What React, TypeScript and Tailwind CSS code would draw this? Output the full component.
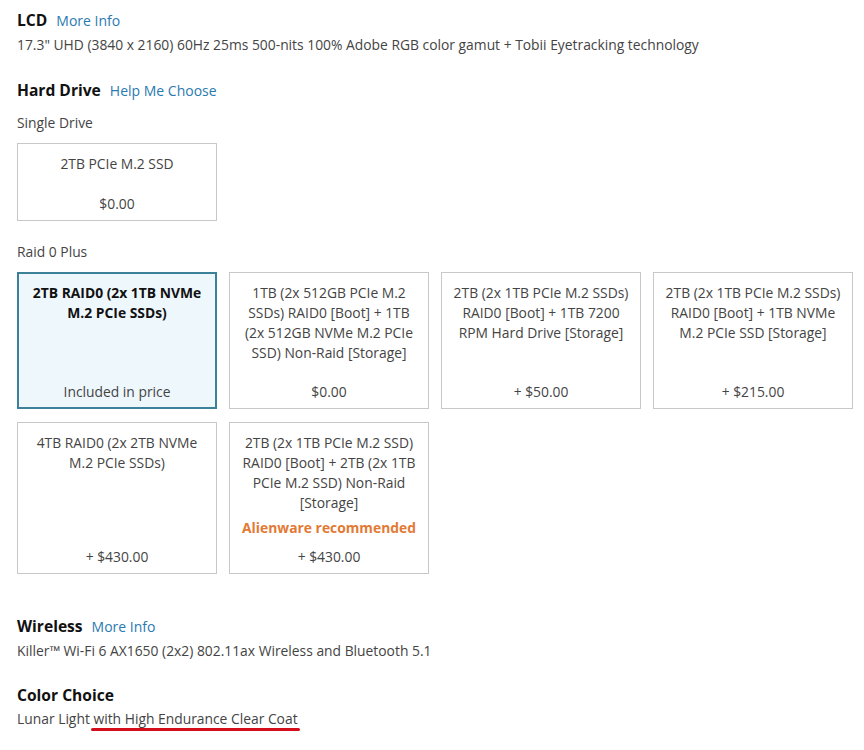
import React from "react";

type Card = { lines: string; price: string; selected?: boolean; rec?: boolean };

const raid: Card[] = [
  { lines: "2TB RAID0 (2x 1TB NVMe M.2 PCIe SSDs)", price: "Included in price", selected: true },
  { lines: "1TB (2x 512GB PCIe M.2 SSDs) RAID0 [Boot] + 1TB (2x 512GB NVMe M.2 PCIe SSD) Non-Raid [Storage]", price: "$0.00" },
  { lines: "2TB (2x 1TB PCIe M.2 SSDs) RAID0 [Boot] + 1TB 7200 RPM Hard Drive [Storage]", price: "+ $50.00" },
  { lines: "2TB (2x 1TB PCIe M.2 SSDs) RAID0 [Boot] + 1TB NVMe M.2 PCIe SSD [Storage]", price: "+ $215.00" },
  { lines: "4TB RAID0 (2x 2TB NVMe M.2 PCIe SSDs)", price: "+ $430.00" },
  { lines: "2TB (2x 1TB PCIe M.2 SSD) RAID0 [Boot] + 2TB (2x 1TB PCIe M.2 SSD) Non-Raid [Storage]", price: "+ $430.00", rec: true },
];

function OptionCard({ c }: { c: Card }) {
  return (
    <div
      className={
        c.selected
          ? "flex flex-col items-center text-center border-2 border-[#3a8199] bg-[#eef7fc] px-[10px] pt-[9px] pb-[5px]"
          : "flex flex-col items-center text-center border border-[#c8c8c8] bg-white px-[8px] pt-[10px] pb-[6px]"
      }
    >
      <div className={c.selected ? "font-bold text-[#111] leading-[20px]" : "leading-[20px]"}>{c.lines}</div>
      {c.rec && <div className="mt-[5px] font-bold text-[#e27a35] leading-[20px] whitespace-nowrap">Alienware recommended</div>}
      <div className="mt-auto leading-[20px]">{c.price}</div>
    </div>
  );
}

function Heading({ title, link }: { title: string; link?: string }) {
  return (
    <div className="flex items-baseline gap-[9px] leading-[22px]">
      <span className="text-[15.6px] font-bold text-[#111]">{title}</span>
      {link && <span className="text-[14px] text-[#2a7ab0]">{link}</span>}
    </div>
  );
}

export default function App() {
  return (
    <div
      className="w-[864px] h-[750px] bg-white text-[13.85px] text-[#444] pl-[17px] pt-[9px] overflow-hidden"
      style={{ fontFamily: '"Open Sans", "Noto Sans", sans-serif' }}
    >
      <Heading title="LCD" link="More Info" />
      <div className="leading-[24px] mt-[1px]">
        17.3" UHD (3840 x 2160) 60Hz 25ms 500-nits 100% Adobe RGB color gamut + Tobii Eyetracking technology
      </div>

      <div className="mt-[22px]">
        <Heading title="Hard Drive" link="Help Me Choose" />
      </div>
      <div className="mt-[10px] leading-[22px]">Single Drive</div>
      <div className="mt-[9px] w-[200px] h-[78px] flex flex-col items-center text-center border border-[#c8c8c8] pt-[10px] pb-[6px]">
        <div className="leading-[20px]">2TB PCIe M.2 SSD</div>
        <div className="mt-auto leading-[20px]">$0.00</div>
      </div>

      <div className="mt-[20px] leading-[22px]">Raid 0 Plus</div>
      <div className="mt-[9px] grid grid-cols-[200px_200px_200px_200px] grid-rows-[137px_152px] gap-x-[12px] gap-y-[13px]">
        {raid.map((c, i) => (
          <OptionCard key={i} c={c} />
        ))}
      </div>

      <div className="mt-[41px]">
        <Heading title="Wireless" link="More Info" />
      </div>
      <div className="leading-[24px] mt-[1px]">Killer™ Wi-Fi 6 AX1650 (2x2) 802.11ax Wireless and Bluetooth 5.1</div>

      <div className="mt-[21px]">
        <Heading title="Color Choice" />
      </div>
      <div className="leading-[24px] mt-[1px]">
        Lunar Light{" "}
        <span className="relative inline-block">
          with High Endurance Clear Coat
          <span className="absolute left-[-2px] right-[-2px] top-[21px] h-[3px] rounded-full bg-[#d40d1a]" />
        </span>
      </div>
    </div>
  );
}
